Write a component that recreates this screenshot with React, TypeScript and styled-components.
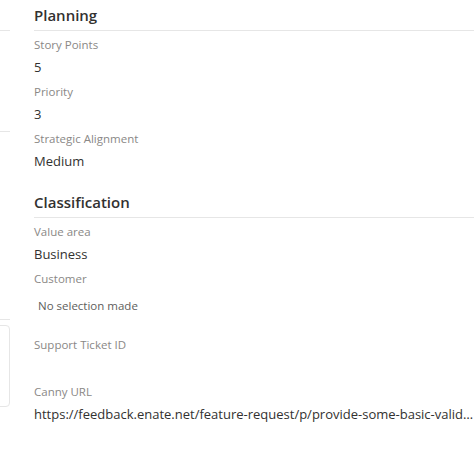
import React from 'react';
import styled, { createGlobalStyle } from 'styled-components';

const GlobalStyle = createGlobalStyle`
  html, body {
    margin: 0;
    padding: 0;
    background: #ffffff;
  }
  body {
    font-family: "Open Sans", "Noto Sans", sans-serif;
    color: #333333;
    overflow: hidden;
  }
`;

const Page = styled.div`
  display: grid;
  grid-template-columns: 10px 1fr;
  column-gap: 24px;
  width: 474px;
  height: 454px;
  overflow: hidden;
`;

const SideColumn = styled.div`
  display: flex;
  flex-direction: column;
  padding-top: 30px;
`;

const SideRule = styled.div<{ $gap: number }>`
  height: 1px;
  background: #e6e6e6;
  margin-bottom: ${p => p.$gap}px;
`;

const SideCard = styled.div`
  height: 80px;
  margin-left: -10px;
  border: 1px solid #e6e6e6;
  border-radius: 4px;
`;

const MainColumn = styled.div`
  min-width: 0;
  display: flex;
  flex-direction: column;
`;

const Section = styled.section`
  display: flex;
  flex-direction: column;
  margin-bottom: 9px;
`;

const SectionTitle = styled.h2`
  margin: 0 -10px 0 0;
  font-size: 15px;
  font-weight: 600;
  line-height: 30px;
  height: 30px;
  color: #323130;
  border-bottom: 1px solid #e6e6e6;
`;

const Fields = styled.div`
  display: flex;
  flex-direction: column;
  padding-top: 6px;
`;

const Field = styled.div`
  display: flex;
  flex-direction: column;
  margin-bottom: 7px;
`;

const Label = styled.div`
  font-size: 11.5px;
  line-height: 16px;
  color: #8a8886;
  margin-bottom: 4px;
`;

const Value = styled.div`
  font-size: 13px;
  line-height: 20px;
  min-height: 20px;
  color: #323130;
  white-space: nowrap;
  overflow: hidden;
  text-overflow: ellipsis;
`;

const Picker = styled.div`
  font-size: 11.5px;
  line-height: 20px;
  height: 39px;
  padding: 5px 4px 0;
  box-sizing: border-box;
  color: #605e5c;
`;

type FieldItem = { label: string; value?: string; picker?: boolean };

const planning: FieldItem[] = [
  { label: 'Story Points', value: '5' },
  { label: 'Priority', value: '3' },
  { label: 'Strategic Alignment', value: 'Medium' },
];

const classification: FieldItem[] = [
  { label: 'Value area', value: 'Business' },
  { label: 'Customer', value: 'No selection made', picker: true },
  { label: 'Support Ticket ID', value: '' },
  {
    label: 'Canny URL',
    value:
      'https://feedback.enate.net/feature-request/p/provide-some-basic-validation-on-fields',
  },
];

const FieldList = ({ items }: { items: FieldItem[] }) => (
  <Fields>
    {items.map(f => (
      <Field key={f.label}>
        <Label>{f.label}</Label>
        {f.picker ? <Picker>{f.value}</Picker> : <Value>{f.value}</Value>}
      </Field>
    ))}
  </Fields>
);

export default function App() {
  return (
    <>
      <GlobalStyle />
      <Page>
        <SideColumn>
          <SideRule $gap={100} />
          <SideRule $gap={187} />
          <SideRule $gap={5} />
          <SideCard />
        </SideColumn>
        <MainColumn>
          <Section>
            <SectionTitle>Planning</SectionTitle>
            <FieldList items={planning} />
          </Section>
          <Section>
            <SectionTitle>Classification</SectionTitle>
            <FieldList items={classification} />
          </Section>
        </MainColumn>
      </Page>
    </>
  );
}
